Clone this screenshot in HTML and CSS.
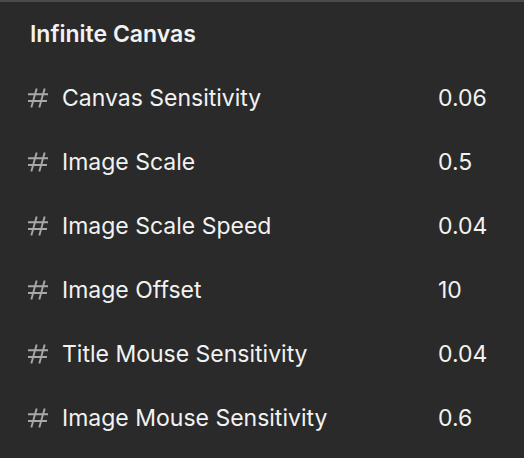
FILE: index.html
```html
<!DOCTYPE html>
<html>
<head>
<meta charset="utf-8">
<link rel="stylesheet" href="styles.css">
</head>
<body>
<div class="panel">
  <div class="title">Infinite Canvas</div>
  <div class="list">
    <div class="row"><svg class="hash" viewBox="0 0 20 22"><path d="M8.7 1.5L3.3 20.5M16.7 1.5L11.3 20.5M0 7.3H20M0 14H19"/></svg><span class="label">Canvas Sensitivity</span><span class="value">0.06</span></div>
    <div class="row"><svg class="hash" viewBox="0 0 20 22"><path d="M8.7 1.5L3.3 20.5M16.7 1.5L11.3 20.5M0 7.3H20M0 14H19"/></svg><span class="label">Image Scale</span><span class="value">0.5</span></div>
    <div class="row"><svg class="hash" viewBox="0 0 20 22"><path d="M8.7 1.5L3.3 20.5M16.7 1.5L11.3 20.5M0 7.3H20M0 14H19"/></svg><span class="label">Image Scale Speed</span><span class="value">0.04</span></div>
    <div class="row"><svg class="hash" viewBox="0 0 20 22"><path d="M8.7 1.5L3.3 20.5M16.7 1.5L11.3 20.5M0 7.3H20M0 14H19"/></svg><span class="label">Image Offset</span><span class="value">10</span></div>
    <div class="row"><svg class="hash" viewBox="0 0 20 22"><path d="M8.7 1.5L3.3 20.5M16.7 1.5L11.3 20.5M0 7.3H20M0 14H19"/></svg><span class="label">Title Mouse Sensitivity</span><span class="value">0.04</span></div>
    <div class="row"><svg class="hash" viewBox="0 0 20 22"><path d="M8.7 1.5L3.3 20.5M16.7 1.5L11.3 20.5M0 7.3H20M0 14H19"/></svg><span class="label">Image Mouse Sensitivity</span><span class="value">0.6</span></div>
  </div>
</div>
</body>
</html>
```
FILE: styles.css
```css
html, body {
  margin: 0;
  padding: 0;
  background: #2a2a2a;
}
body {
  width: 524px;
  height: 458px;
  overflow: hidden;
  font-family: Inter, "Noto Sans", sans-serif;
  color: #f2f2f2;
}
.panel {
  border-top: 2px solid #4b4b4b;
  padding: 0 0 0 28px;
}
.title {
  font-size: 23px;
  font-weight: 600;
  line-height: 28px;
  padding: 18px 0 0 2px;
  height: 46px;
  box-sizing: border-box;
}
.list {
  display: flex;
  flex-direction: column;
  margin-top: 18px;
}
.row {
  display: flex;
  align-items: center;
  height: 64px;
  font-size: 23px;
}
.hash {
  width: 20px;
  height: 22px;
  margin-right: 14px;
  fill: none;
  stroke: #a8a8a8;
  stroke-width: 1.9;
}
.label {
  width: 376px;
}
```
